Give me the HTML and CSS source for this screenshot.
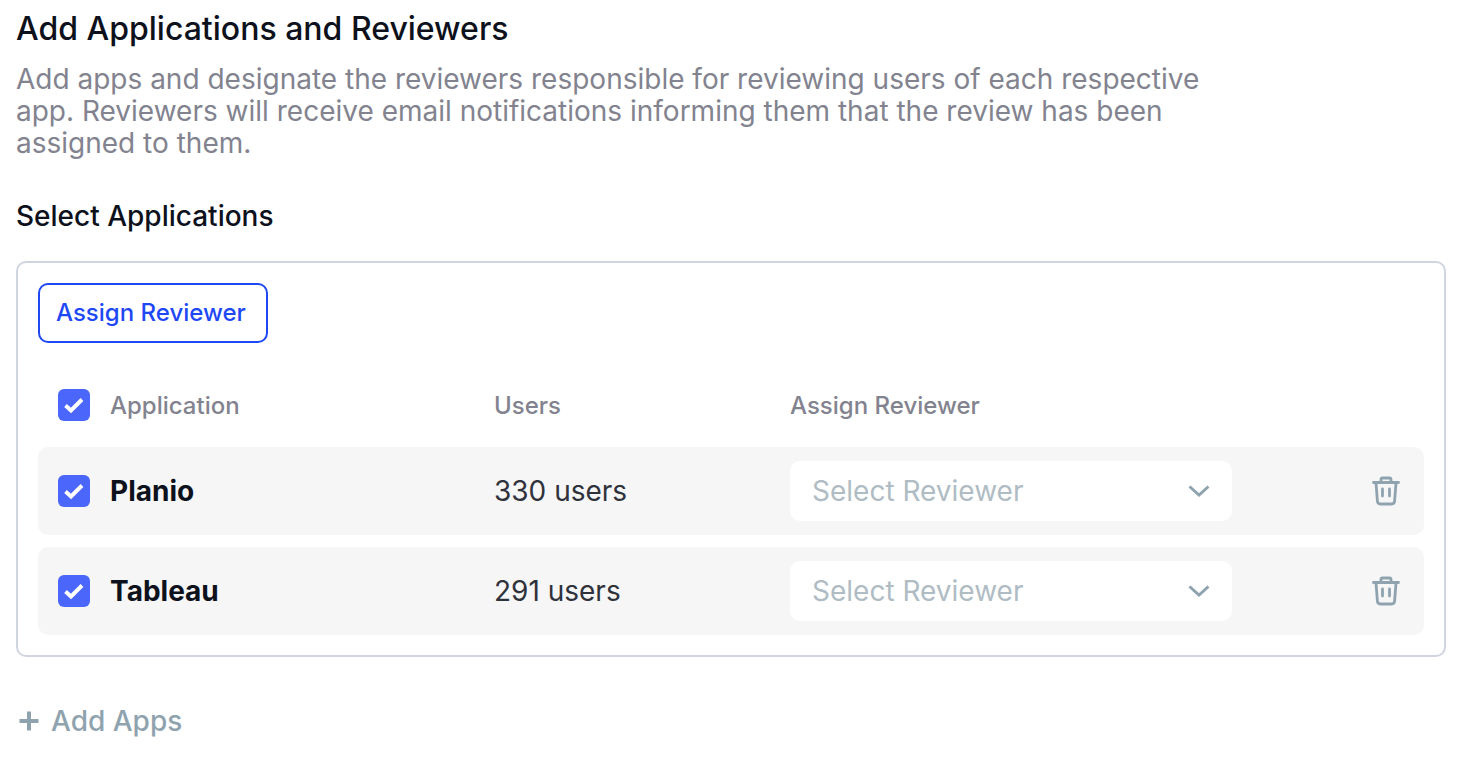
FILE: index.html
```html
<!DOCTYPE html>
<html lang="en">
<head>
    <meta charset="UTF-8">
    <meta name="viewport" content="width=device-width, initial-scale=1.0">
    <title>Add Applications and Reviewers</title>
    <link rel="stylesheet" href="styles.css">
</head>
<body>
    <div class="page">
        <h1>Add Applications and Reviewers</h1>
        <p class="intro">Add apps and designate the reviewers responsible for reviewing users of each respective app. Reviewers will receive email notifications informing them that the review has been assigned to them.</p>

        <h2>Select Applications</h2>

        <div class="panel">
            <button class="assign-btn">Assign Reviewer</button>

            <div class="table-head">
                <div class="col-app">
                    <span class="checkbox"><svg width="20" height="20" viewBox="0 0 20 20"><path d="M1.500 10.500l5.500 5L18 4.500" fill="none" stroke="#fff" stroke-width="3.900"/></svg></span>
                    <span>Application</span>
                </div>
                <div class="col-users">Users</div>
                <div class="col-reviewer">Assign Reviewer</div>
            </div>

            <!-- Application rows -->
            <div class="app-row">
                <div class="col-app">
                    <span class="checkbox"><svg width="20" height="20" viewBox="0 0 20 20"><path d="M1.500 10.500l5.500 5L18 4.500" fill="none" stroke="#fff" stroke-width="3.900"/></svg></span>
                    <span class="app-name">Planio</span>
                </div>
                <div class="col-users">330 users</div>
                <div class="col-reviewer">
                    <div class="select">
                        <span>Select Reviewer</span>
                        <svg width="22" height="12" viewBox="0 0 22 12"><path d="M1.500 1.500l9.500 8.500 9.500-8.500" fill="none" stroke="#8fa3af" stroke-width="3"/></svg>
                    </div>
                </div>
                <svg class="trash" width="28" height="30" viewBox="0 0 28 30" fill="none" stroke="#8fa3af" stroke-width="2.800" stroke-linecap="round" stroke-linejoin="round"><path d="M1.500 6.500h25"/><path d="M9 6V3.500Q9 2 10.500 2h7Q19 2 19 3.500V6"/><path d="M4 7l1.400 18q.2 3 3 3h11.200q2.800 0 3-3L24 7"/><path d="M10.500 13v7M17.500 13v7"/></svg>
            </div>

            <div class="app-row">
                <div class="col-app">
                    <span class="checkbox"><svg width="20" height="20" viewBox="0 0 20 20"><path d="M1.500 10.500l5.500 5L18 4.500" fill="none" stroke="#fff" stroke-width="3.900"/></svg></span>
                    <span class="app-name">Tableau</span>
                </div>
                <div class="col-users">291 users</div>
                <div class="col-reviewer">
                    <div class="select">
                        <span>Select Reviewer</span>
                        <svg width="22" height="12" viewBox="0 0 22 12"><path d="M1.500 1.500l9.500 8.500 9.500-8.500" fill="none" stroke="#8fa3af" stroke-width="3"/></svg>
                    </div>
                </div>
                <svg class="trash" width="28" height="30" viewBox="0 0 28 30" fill="none" stroke="#8fa3af" stroke-width="2.800" stroke-linecap="round" stroke-linejoin="round"><path d="M1.500 6.500h25"/><path d="M9 6V3.500Q9 2 10.500 2h7Q19 2 19 3.500V6"/><path d="M4 7l1.400 18q.2 3 3 3h11.200q2.800 0 3-3L24 7"/><path d="M10.500 13v7M17.500 13v7"/></svg>
            </div>
        </div>

        <div class="add-apps">
            <svg width="20" height="20" viewBox="0 0 20 20"><path d="M10 0.500v19M0.500 10h19" fill="none" stroke="#8fa3af" stroke-width="4"/></svg>
            <span>Add Apps</span>
        </div>
    </div>
</body>
</html>
```

FILE: styles.css
```css
body {
    font-family: Inter, "Liberation Sans", sans-serif;
    margin: 0;
    padding: 0;
    background-color: #fff;
    color: #0d111c;
}

.page {
    padding: 10px 33px 0 16px;
}

h1 {
    font-size: 32px;
    line-height: 38px;
    font-weight: 500;
    margin: 0 0 15px;
}

.intro {
    width: 1200px;
    margin: 0 0 41px;
    font-size: 28px;
    line-height: 32px;
    color: #82838f;
}

h2 {
    font-size: 28px;
    line-height: 32px;
    font-weight: 500;
    margin: 0 0 29px;
}

.panel {
    border: 2px solid #d0d5e0;
    border-radius: 10px;
    padding: 20px;
}

.assign-btn {
    display: block;
    width: 230px;
    height: 60px;
    background-color: #fff;
    border: 2px solid #1f48f5;
    border-radius: 10px;
    color: #1f48f5;
    font-family: inherit;
    font-size: 24px;
    font-weight: 500;
    text-align: left;
    padding: 0 0 2px 16px;
}

.table-head,
.app-row {
    display: flex;
    align-items: center;
    padding: 0 24px 0 20px;
}

.table-head {
    height: 84px;
    padding-top: 20px;
    font-size: 24px;
    font-weight: 500;
    color: #82838f;
}

.app-row {
    height: 88px;
    margin-bottom: 12px;
    background-color: #f6f6f7;
    border-radius: 10px;
    font-size: 28px;
    color: #30323b;
}

.app-row:last-child {
    margin-bottom: 0;
}

.col-app {
    display: flex;
    align-items: center;
    gap: 20px;
    width: 436px;
}

.col-users {
    width: 296px;
}

.col-reviewer {
    width: 442px;
}

.checkbox {
    display: flex;
    align-items: center;
    justify-content: center;
    width: 32px;
    height: 32px;
    background-color: #4a66fb;
    border-radius: 6px;
}

.app-name {
    font-weight: 700;
    color: #0d111c;
}

.select {
    display: flex;
    align-items: center;
    justify-content: space-between;
    height: 60px;
    padding: 0 22px;
    background-color: #fff;
    border-radius: 10px;
    color: #b0bcc4;
}

.trash {
    margin-left: auto;
}

.add-apps {
    display: flex;
    align-items: center;
    gap: 12px;
    margin-top: 47px;
    padding-left: 3px;
    font-size: 28px;
    line-height: 34px;
    font-weight: 500;
    color: #8fa3af;
}
```
